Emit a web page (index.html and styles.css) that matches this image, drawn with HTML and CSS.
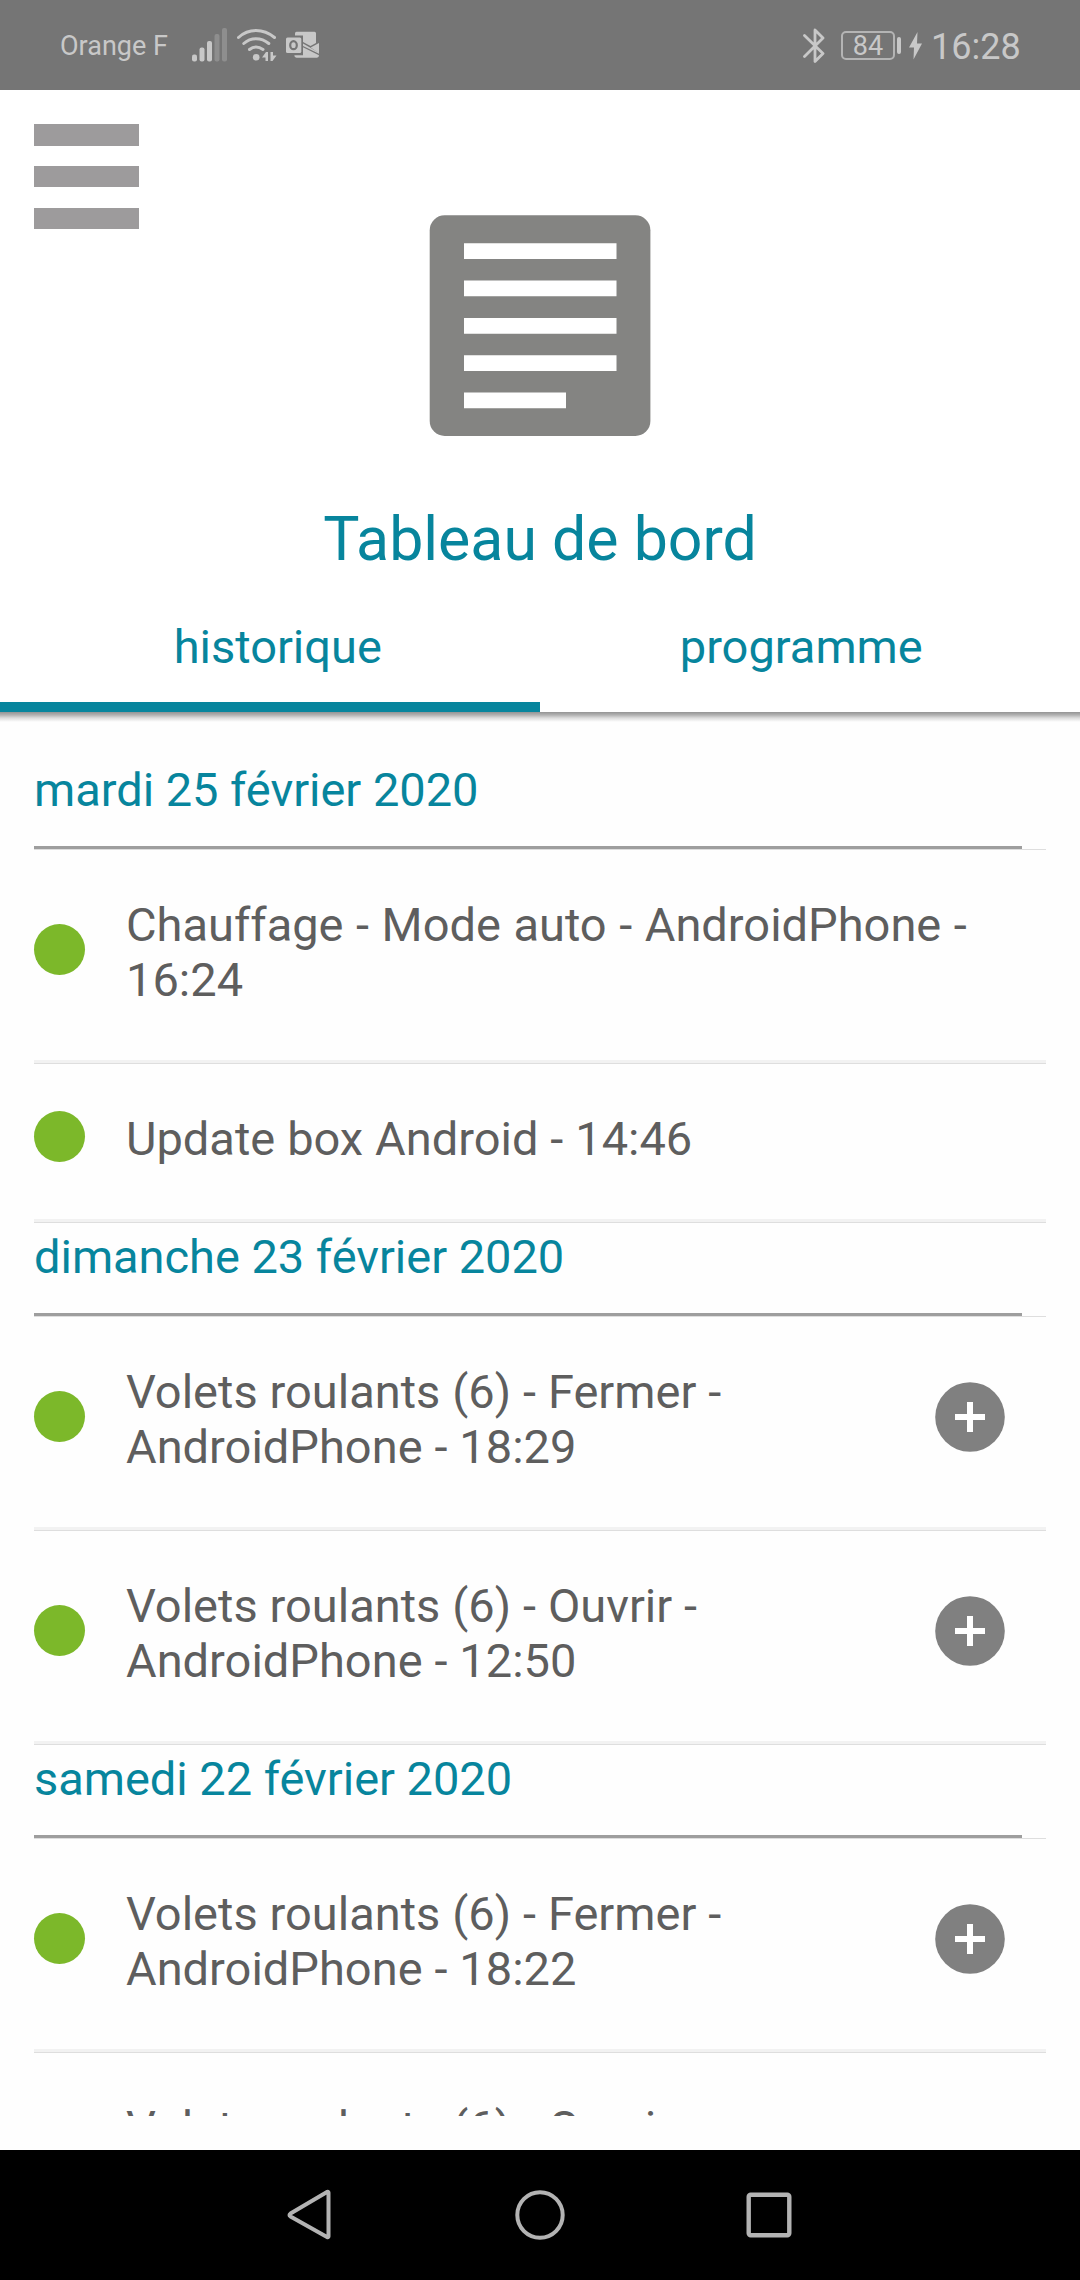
FILE: index.html
```html
<!DOCTYPE html>
<html lang="fr">
<head>
<meta charset="utf-8">
<title>Tableau de bord</title>
<link rel="stylesheet" href="styles.css">
</head>
<body>
<div class="screen">
  <div class="status-bar">
    <span class="carrier">Orange F</span>
    <svg class="signal" width="36" height="34" viewBox="0 0 36 34" fill="#c8c8c8">
      <rect x="0" y="26.500" width="5" height="7" rx="2"/>
      <rect x="7.500" y="19.500" width="5" height="14" rx="2"/>
      <rect x="15" y="13" width="5" height="20.500" rx="2"/>
      <g fill="#8e8e8e"><rect x="22.500" y="6" width="5" height="27.500" rx="2"/><rect x="30" y="0" width="5" height="33.500" rx="2"/></g>
    </svg>
    <svg class="wifi" width="40" height="34" viewBox="0 0 40 34" fill="none" stroke="#c8c8c8" stroke-width="3" stroke-linecap="round">
      <path d="M1.500 9.500Q9 2.500 19 2.500T37.500 9.500"/>
      <path d="M6.800 15.500Q12 10.700 19 10.700T31.800 15.500"/>
      <path d="M12.500 21.500Q15.500 19 19 19T26 21.500"/>
      <circle cx="19.200" cy="29.200" r="3.300" fill="#c8c8c8" stroke="none"/>
      <path d="M25 29.500L29 24H31V33H28.500V29.500ZM33.500 24H36V27.500H39.500L35.500 33H33.500Z" fill="#c8c8c8" stroke="none"/>
    </svg>
    <svg class="mail" width="34" height="28" viewBox="0 0 34 28" fill="#c8c8c8">
      <path d="M9 2.500Q9 .8 10.500 .8H28.500Q30 .8 30 2.300V12L24.500 15L17 11V4.500H9Z"/>
      <path d="M33 12V22.300L24.700 16.500Z"/>
      <path d="M17 12.500L33 21.800V22.800L17 15Z"/>
      <path d="M17 16.300L33 24.300Q33 26.700 31 26.700H10.500Q8.300 26.700 8.300 24.300H17Z"/>
      <rect x="0" y="6.500" width="15.300" height="15.500" rx="1.500"/>
      <ellipse cx="7.500" cy="14.200" rx="3.300" ry="4" fill="none" stroke="#757575" stroke-width="2.200"/>
    </svg>
    <span class="spacer"></span>
    <svg class="bluetooth" width="22" height="36" viewBox="0 0 22 36" fill="none" stroke="#c8c8c8" stroke-width="2.800" stroke-linejoin="round" stroke-linecap="round">
      <path d="M1.500 7.500L20 25.500L12 33.500V2L20 10L1.500 28.500"/>
    </svg>
    <span class="battery">84</span>
    <span class="battery-tip"></span>
    <svg class="bolt" width="14" height="28" viewBox="0 0 14 28"><path d="M8.500 0L0 15.500H5L4.500 27.500L13 11.500H8Z" fill="#c8c8c8"/></svg>
    <span class="clock">16:28</span>
  </div>

  <header class="header">
    <div class="menu"><i></i><i></i><i></i></div>
    <svg class="board-icon" width="222" height="222" viewBox="0 0 222 222">
      <rect x=".7" y=".3" width="220.700" height="220.700" rx="15" fill="#848482"/>
      <path d="M35 28.300h152.500v15.700h-152.500zM35 65.600h152.500v15.700h-152.500zM35 103h152.500v15.700h-152.500zM35 140.300h152.500v15.700h-152.500zM35 177.600h102v15.700h-102z" fill="#fff"/>
    </svg>
    <h1 class="title">Tableau de bord</h1>
    <nav class="tabs">
      <span class="tab tab-active">historique</span>
      <span class="tab">programme</span>
    </nav>
  </header>

  <main class="list">
    <h2 class="day">mardi 25 février 2020</h2>
    <div class="row"><i class="dot"></i><p class="label label-wide">Chauffage - Mode auto - AndroidPhone -<br>16:24</p></div>
    <div class="row"><i class="dot"></i><p class="label">Update box Android - 14:46</p></div>
    <h2 class="day">dimanche 23 février 2020</h2>
    <div class="row"><i class="dot"></i><p class="label">Volets roulants (6) - Fermer -<br>AndroidPhone - 18:29</p>
      <svg class="plus" width="70" height="70" viewBox="0 0 70 70"><circle cx="35" cy="35" r="34.800" fill="#808080"/><path d="M35 20V50M20 35H50" stroke="#fff" stroke-width="6"/></svg></div>
    <div class="row"><i class="dot"></i><p class="label">Volets roulants (6) - Ouvrir -<br>AndroidPhone - 12:50</p>
      <svg class="plus" width="70" height="70" viewBox="0 0 70 70"><circle cx="35" cy="35" r="34.800" fill="#808080"/><path d="M35 20V50M20 35H50" stroke="#fff" stroke-width="6"/></svg></div>
    <h2 class="day">samedi 22 février 2020</h2>
    <div class="row"><i class="dot"></i><p class="label">Volets roulants (6) - Fermer -<br>AndroidPhone - 18:22</p>
      <svg class="plus" width="70" height="70" viewBox="0 0 70 70"><circle cx="35" cy="35" r="34.800" fill="#808080"/><path d="M35 20V50M20 35H50" stroke="#fff" stroke-width="6"/></svg></div>
    <div class="row"><p class="label label-only">Volets roulants (6) - Ouvrir -</p></div>
  </main>

  <footer class="nav-bar">
    <svg class="back" width="46" height="52" viewBox="1 0 46 52" fill="none" stroke="#b3b3b3" stroke-width="4" stroke-linejoin="round"><path d="M41.500 3.500V47.500Q41.500 48.500 40 48L3.500 27.500Q1.500 26 3.500 24.500L40 3Q41.500 2.500 41.500 3.500Z"/></svg>
    <svg width="50" height="52" viewBox="0 0 50 52" fill="none" stroke="#b3b3b3" stroke-width="4"><circle cx="25" cy="26" r="22.700"/></svg>
    <svg width="46" height="52" viewBox="0 0 46 52" fill="none" stroke="#b3b3b3" stroke-width="4.400"><rect x="2.700" y="5.700" width="40.600" height="40.600" rx="2"/></svg>
  </footer>
</div>
</body>
</html>
```
FILE: styles.css
```css
* {
  box-sizing: border-box;
}

body {
  margin: 0;
  font-family: Roboto, sans-serif;
  background: #fefefe;
}

.screen {
  display: flex;
  flex-direction: column;
  width: 1080px;
  height: 2280px;
  overflow: hidden;
}

.status-bar {
  display: flex;
  align-items: flex-start;
  flex: none;
  height: 90px;
  padding: 28px 62px 0 60px;
  background: #757575;
  color: #c8c8c8;
  white-space: nowrap;
}

.carrier {
  width: 132px;
  font-size: 27px;
  line-height: 36px;
}

.wifi {
  margin-left: 9px;
}

.mail {
  margin: 3px 0 0 9px;
}

.spacer {
  flex: 1;
}

.bluetooth {
  margin-right: 16px;
}

.battery {
  width: 54px;
  height: 29px;
  margin-top: 3px;
  border: 2px solid #b4b4b4;
  border-radius: 5px;
  font-size: 27px;
  line-height: 26px;
  text-align: center;
}

.battery-tip {
  width: 4px;
  height: 17px;
  margin: 9px 8px 0 2px;
  border-radius: 2px;
  background: #c8c8c8;
}

.bolt {
  margin: 4px 8px 0 0;
}

.clock {
  width: 87px;
  font-size: 36px;
  line-height: 38px;
}

.header {
  display: flex;
  flex-direction: column;
  flex: none;
  height: 622px;
  background: #fff;
}

.menu {
  display: flex;
  flex-direction: column;
  justify-content: space-between;
  width: 105px;
  height: 105px;
  margin: 34px 0 0 34px;
}

.menu i {
  height: 21.500px;
  background: #9d9b9c;
}

.board-icon {
  align-self: center;
  margin-top: -14px;
}

.title {
  margin: 68px 0 0;
  color: #07859d;
  font-size: 60.800px;
  font-weight: 400;
  line-height: 70px;
  text-align: center;
}

.tabs {
  display: flex;
  flex: 1;
}

.tab {
  flex: 1 1 0;
  padding: 44px 17px 0 0;
  border-bottom: 10px solid transparent;
  color: #07859d;
  font-size: 47px;
  line-height: 55px;
  text-align: center;
}

.tab-active {
  padding: 44px 0 0 16px;
  border-bottom-color: #07859d;
}

.list {
  height: 1404px;
  padding: 44px 34px 0;
  overflow: hidden;
  background: linear-gradient(#949494, #b2b2b2 3px, #dcdcdc 6px, #fefefe 10px);
}

.day {
  width: 1012px;
  height: 94px;
  margin: 0;
  padding-top: 6px;
  border-bottom: 1px solid #dedede;
  background: linear-gradient(#9e9e9e, #9e9e9e) left bottom / 988px 3px no-repeat;
  color: #07859d;
  font-size: 47px;
  font-weight: 400;
  letter-spacing: -0.03px;
  line-height: 55px;
}

.row {
  display: flex;
  align-items: center;
  width: 1012px;
  padding: 47px 41px 56px 0;
  border-bottom: 1px solid #dedede;
  background: linear-gradient(#f2f2f2, #f2f2f2) left bottom / 100% 3px no-repeat;
}

.dot {
  flex: none;
  width: 51px;
  height: 51px;
  margin: -3px 0 2px;
  border-radius: 50%;
  background: #7cb82a;
}

.label {
  flex: 1;
  margin: 0 0 0 41px;
  color: #5e5e5e;
  font-size: 47px;
  line-height: 55px;
  word-spacing: 0.25px;
  white-space: nowrap;
}

.label-wide {
  word-spacing: 0.9px;
}

.label-only {
  margin-left: 92px;
}

.plus {
  flex: none;
  margin-bottom: 4px;
}

.nav-bar {
  display: flex;
  align-items: center;
  justify-content: center;
  gap: 181px;
  flex: none;
  height: 130px;
  margin-top: 34px;
  background: #000;
}

.back {
  overflow: visible;
}
```
